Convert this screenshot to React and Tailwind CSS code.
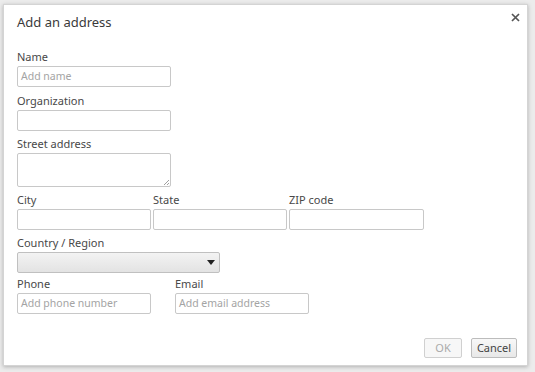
import React from "react";

const font = { fontFamily: '"Noto Sans", "Open Sans", sans-serif' };

function Label({ children, className = "" }) {
  return (
    <div className={"h-[14px] leading-[14px] text-[11px] text-[#484848] " + className}>
      {children}
    </div>
  );
}

function Input({ w, placeholder = "", className = "" }) {
  return (
    <div
      className={
        "mt-[2px] h-[21px] border border-[#c8c8c8] rounded-[2px] bg-white px-[3px] text-[10.5px] leading-[19px] text-[#a4a4a4] " +
        w +
        " " +
        className
      }
    >
      {placeholder}
    </div>
  );
}

export default function App() {
  return (
    <div
      className="w-[535px] h-[372px] bg-[#ececec] pt-[4px] pl-[3px] overflow-hidden"
      style={font}
    >
      <div className="relative w-[525px] h-[362px] bg-white border border-[#d4d4d4] shadow-[0_1px_4px_rgba(0,0,0,0.25)] flex flex-col pl-[13px]">
        <div className="mt-[9px] h-[16px] leading-[16px] text-[13px] text-[#3a3a3a]">
          Add an address
        </div>
        <svg
          className="absolute right-[7px] top-[8px]"
          width="9"
          height="9"
          viewBox="0 0 9 9"
        >
          <path d="M1 1L8 8M8 1L1 8" stroke="#555" strokeWidth="1.7" />
        </svg>

        <Label className="mt-[20px]">Name</Label>
        <Input w="w-[154px]" placeholder="Add name" />

        <Label className="mt-[7px]">Organization</Label>
        <Input w="w-[154px]" />

        <Label className="mt-[6px]">Street address</Label>
        <div className="mt-[2px] relative w-[154px] h-[34px] border border-[#c8c8c8] rounded-[2px]">
          <svg className="absolute right-[1px] bottom-[1px]" width="6" height="6" viewBox="0 0 6 6">
            <path d="M6 1L1 6M6 4L4 6" stroke="#888" strokeWidth="0.8" />
          </svg>
        </div>

        <div className="mt-[6px] flex gap-[2px]">
          <div>
            <Label>City</Label>
            <Input w="w-[134px]" />
          </div>
          <div>
            <Label>State</Label>
            <Input w="w-[134px]" />
          </div>
          <div>
            <Label>ZIP code</Label>
            <Input w="w-[135px]" />
          </div>
        </div>

        <Label className="mt-[6px]">Country / Region</Label>
        <div className="mt-[2px] w-[203px] h-[21px] border border-[#c0c0c0] rounded-[2px] bg-gradient-to-b from-[#f3f3f3] to-[#e3e3e3] flex items-center justify-end pr-[4px]">
          <svg width="8" height="5" viewBox="0 0 8 5">
            <path d="M0 0H8L4 5Z" fill="#222" />
          </svg>
        </div>

        <div className="mt-[4px] flex gap-[24px]">
          <div>
            <Label>Phone</Label>
            <Input w="w-[134px]" placeholder="Add phone number" />
          </div>
          <div>
            <Label>Email</Label>
            <Input w="w-[134px]" placeholder="Add email address" />
          </div>
        </div>

        <div className="flex-1" />
        <div className="flex justify-end gap-[9px] pr-[10px] mb-[7px]">
          <div className="w-[38px] h-[20px] border border-[#d0d0d0] rounded-[2px] bg-[#f7f7f7] text-[11px] leading-[18px] text-center text-[#aaa]">
            OK
          </div>
          <div className="w-[46px] h-[20px] border border-[#bcbcbc] rounded-[2px] bg-gradient-to-b from-[#f8f8f8] to-[#e8e8e8] text-[11px] leading-[18px] text-center text-[#444]">
            Cancel
          </div>
        </div>
      </div>
    </div>
  );
}
